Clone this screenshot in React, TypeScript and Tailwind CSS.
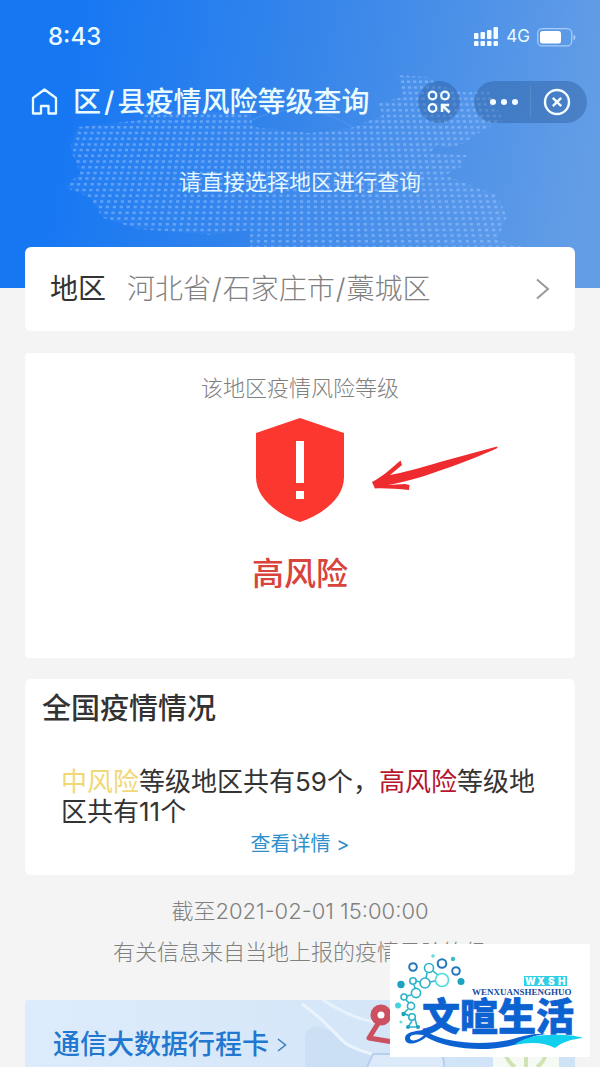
import React from 'react';

const MAP_OUTLINE =
    'M398 75 L430 77 L438 85 L467 93 L487 88 L503 120 L483 130 L467 142 L450 148 L437 145 L430 153 L467 155 L460 168 L445 175 L483 190 L497 194 L507 217 L497 240 L524 247 L250 252 L250 230 L210 235 L176 232 L137 229 L103 218 L90 198 L65 187 L80 173 L70 148 L77 127 L140 120 L147 110 L250 113 L253 127 L310 133 L350 128 L383 115 L377 103 L403 97 Z';

// rows of short dashes, spreading a little wider towards the bottom
const buildDots = () => {
    let d = '';
    for (let row = 0; row < 32; row++) {
        const y = 76 + row * 5.7;
        const step = 5.9 + row * 0.045;
        for (let col = -42; col <= 42; col++) {
            d += `M${(300 + col * step).toFixed(1)} ${y.toFixed(1)}h3.2`;
        }
    }
    return d;
};

const MAP_DOTS = buildDots();

const HeaderMap = React.memo(() => (
    <svg
        className="absolute top-0 left-1/2 -translate-x-1/2 pointer-events-none"
        width="600"
        height="288"
        viewBox="0 0 600 288"
        aria-hidden="true"
    >
        <clipPath id="map-outline">
            <path d={MAP_OUTLINE} />
        </clipPath>
        <g clipPath="url(#map-outline)">
            <path d={MAP_OUTLINE} fill="#7db4ff" opacity="0.1" />
            <path d={MAP_DOTS} stroke="#a9cdff" strokeWidth="2.5" opacity="0.44" />
        </g>
        <path d="M250 121 C275 108 315 102 352 127" fill="none" stroke="#8fbcf8" opacity="0.25" />
    </svg>
));

HeaderMap.displayName = 'HeaderMap';

const StatusBar = () => (
    <div className="relative flex h-[74px] items-center justify-between pl-12 pr-6 text-[#e9fbff]">
        <span className="text-2xl font-medium">8:43</span>
        <div className="flex items-center gap-[7px]">
            <svg width="25" height="20" viewBox="0 0 25 20" fill="#f4fdff" aria-hidden="true">
                <rect x="0" y="6" width="4.5" height="6" rx="1" />
                <rect x="6.5" y="5" width="4.5" height="7" rx="1" />
                <rect x="13" y="3" width="4.5" height="9" rx="1" />
                <rect x="19.5" y="0" width="4.5" height="12" rx="1" />
                <rect x="0" y="14" width="4.5" height="5" rx="1" />
                <rect x="6.5" y="14" width="4.5" height="5" rx="1" />
                <rect x="13" y="14" width="4.5" height="5" rx="1" />
                <rect x="19.5" y="14" width="4.5" height="5" rx="1" />
            </svg>
            <span className="text-[17px]">4G</span>
            <svg width="39" height="19" viewBox="0 0 39 19" aria-hidden="true">
                <rect x="0.7" y="0.7" width="34" height="17.2" rx="4.5" fill="none" stroke="#a5cdf6" strokeWidth="1.3" />
                <rect x="3" y="3" width="21" height="12.5" rx="2.5" fill="#fff" />
                <path d="M36.5 6.5 q2 1 2 3 t-2 3z" fill="#a5cdf6" />
            </svg>
        </div>
    </div>
);

const NavBar = () => (
    <div className="relative flex h-14 items-center pl-[31px] pr-[13px]">
        <button type="button" aria-label="首页">
            <svg width="28" height="28" viewBox="0 0 28 28" fill="none" stroke="#e9fbff" strokeWidth="2.3" strokeLinejoin="round" aria-hidden="true">
                <path d="M2 10 L13.5 1.5 L25 10 V25.5 H17.5 V18 H10 V25.5 H2 Z" />
            </svg>
        </button>
        <h1 className="ml-[14px] flex-1 whitespace-nowrap text-[28px] leading-8 font-medium text-[#e9fbff]">
            区<span className="mx-[3px]">/</span>县疫情风险等级查询
        </h1>
        <button type="button" aria-label="收藏" className="flex size-[42px] items-center justify-center rounded-full bg-[#1f4c8a]/35">
            <svg width="24" height="24" viewBox="0 0 24 24" fill="none" stroke="#f4fdff" strokeWidth="2.2" aria-hidden="true">
                <circle cx="5.5" cy="5.5" r="3.8" />
                <circle cx="18" cy="5.5" r="3.8" />
                <circle cx="5.5" cy="18" r="3.8" />
                <path d="M15 22 V15 H22 M15.5 15.5 L22.5 22.5" strokeWidth="2.5" />
            </svg>
        </button>
        <div className="ml-[14px] flex h-[42px] w-[113px] items-center rounded-full bg-[#1f4c8a]/35">
            <button type="button" aria-label="更多" className="flex h-8 flex-1 items-center justify-center gap-[5px] border-r border-white/10 pl-1">
                <span className="size-[6px] rounded-full bg-[#f4fdff]" />
                <span className="size-[6px] rounded-full bg-[#f4fdff]" />
                <span className="size-[6px] rounded-full bg-[#f4fdff]" />
            </button>
            <button type="button" aria-label="关闭" className="flex h-8 flex-1 items-center justify-center pr-1">
                <svg width="28" height="28" viewBox="0 0 28 28" fill="none" stroke="#f4fdff" strokeWidth="2.4" aria-hidden="true">
                    <circle cx="14" cy="14" r="12" />
                    <path d="M9.8 9.8 L18.2 18.2 M18.2 9.8 L9.8 18.2" />
                </svg>
            </button>
        </div>
    </div>
);

const RiskShield = () => (
    <div className="relative mx-auto mt-[17px] w-[90px]">
        <svg width="90" height="105" viewBox="0 0 90 105" aria-hidden="true">
            <path d="M45 1 L89 16 V60 C89 82 66 98 45 105 C24 98 1 82 1 60 V16 Z" fill="#fb372f" />
            <path d="M41 24 H49 V66 H41 Z M41 74 H49 V82 H41 Z" fill="#fff" />
        </svg>
        <svg className="absolute left-[115px] top-7" width="130" height="48" viewBox="0 0 130 48" aria-hidden="true">
            <path
                d="M127 1.5 L70 17 C50 23 32 28 20 30 L32 20 L30.5 15.5 C22 23 12 32 2 37 L5 43.5 C15 43 27 44 39 45 L39.5 40 L35 39 L18 40 C40 36 55 31 70 25.500 C95 17 112 10 127.5 3 Z"
                fill="#ee2b2e"
            />
        </svg>
    </div>
);

const SiteLogo = () => (
    <div className="absolute bottom-[10px] right-[10px] bg-white">
        <svg width="200" height="113" viewBox="0 0 200 113">
            <g fill="none" stroke="#2ab3c9" strokeWidth="1.6">
                <path d="M26 37 L30 38 M37 29 L36 34 M43 27 L48 31 M40 38 L45 37 M24 41 L25 44 M21 51 L17 52 M16 56 L19 59 M18 65 L14 69 L19 72 M22 77 L18 83 H27 M25 75 L27 82" />
                <circle cx="39" cy="24" r="4.5" />
                <circle cx="35" cy="39" r="5" />
                <circle cx="52" cy="36" r="6.5" stroke="#4fdcdc" />
                <circle cx="23" cy="37" r="3.2" />
                <circle cx="26" cy="49" r="4.6" />
                <circle cx="14" cy="53" r="3" />
                <circle cx="21" cy="62" r="3.6" />
                <circle cx="22" cy="73" r="3.3" />
            </g>
            <g fill="none" stroke="#2377ba" strokeWidth="2">
                <circle cx="23" cy="23" r="3.8" />
                <circle cx="52" cy="19.5" r="4.3" />
                <circle cx="66" cy="27" r="3.8" />
            </g>
            <g fill="#1ba3c0">
                <circle cx="11" cy="40.5" r="3.7" />
                <circle cx="71" cy="37.5" r="3.5" />
                <circle cx="63" cy="15" r="2.2" fill="#3bc0bd" />
                <circle cx="43" cy="12" r="1.8" fill="#6bdcd8" />
                <circle cx="8" cy="61.5" r="3" fill="#46d3dc" />
                <circle cx="13.5" cy="70" r="2.2" />
                <circle cx="11" cy="78" r="1.6" fill="#6bdcd8" />
                <circle cx="18" cy="83" r="2" />
                <circle cx="28" cy="83" r="2" />
            </g>
            <rect x="134" y="32" width="43" height="10" fill="#2fcfe4" />
            <text x="135 147 158 168" y="41" fontSize="10" fontWeight="900" fill="#fff" fontFamily="Inter, sans-serif">WXSH</text>
            <text x="82" y="51" fontSize="9" fontWeight="700" fill="#17499c" fontFamily="'Liberation Serif', serif">WENXUANSHENGHUO</text>
            <text
                x="32"
                y="86"
                fontSize="38"
                fontWeight="900"
                fill="#0d62d2"
                stroke="#0d62d2"
                strokeWidth="0.7"
                fontFamily="'Noto Sans CJK SC', sans-serif"
            >
                文暄生活
            </text>
            <path
                d="M44 84 C38 87 16 85 15 94 C15 103 28 100 36 93 C60 107 105 109 133 98 C140 93 146 91 156 90 C142 89 131 93 119 96 C94 101 60 100 39 89 M34 91 C29 97 20 98 20 94 C20 90 27 90 34 91 Z"
                fill="#0d62d2"
                fillRule="evenodd"
            />
            <path d="M124 101 C133 94 146 91 158 91 C172 90 185 91 193 94 C182 95 172 98 165 104 C154 98 140 98 124 101 Z" fill="#12cfee" />
        </svg>
    </div>
);

const TravelCardBanner = () => (
    <a href="#travel" className="relative mt-9 flex items-center gap-2 overflow-hidden rounded-t-sm bg-linear-to-r from-[#ddecfc] to-[#cfe2f6] pt-[29px] pb-[6px] pl-7">
        <svg className="absolute right-0 top-0" width="300" height="67" viewBox="0 0 300 67" aria-hidden="true">
            <path d="M30 67 V36 Q31 28 42 26 L58 32 Q70 50 100 54 V67 Z" fill="#cbdff5" />
            <path d="M27 4 C50 20 56 30 70 43 C80 50 92 53 105 56" fill="none" stroke="#ebf4fd" strokeWidth="3" />
            <path d="M48 0 C70 14 85 20 110 24" fill="none" stroke="#e8f2fc" strokeWidth="3" />
            <path d="M92 67 L98 54 H166 Q170 60 169 67" fill="#dceafa" stroke="#b5cfee" strokeWidth="2" />
            <path d="M104 22 L94 38 L118 42" fill="none" stroke="#cb5060" strokeWidth="5" strokeLinecap="round" strokeLinejoin="round" />
            <circle cx="106" cy="15" r="7" fill="#fff" stroke="#cb5060" strokeWidth="7" />
            <rect x="218" y="40" width="66" height="30" fill="#f6faf5" />
            <path d="M231 56 Q234 63 240 67 M251 54 V67 M270 56 Q268 63 262 67" fill="none" stroke="#cfe3b4" strokeWidth="4" />
        </svg>
        <span className="relative text-[27px] leading-8 font-medium text-[#2277d0]">通信大数据行程卡</span>
        <svg className="relative" width="10" height="16" viewBox="0 0 10 16" fill="none" stroke="#3f80bd" strokeWidth="1.6" aria-hidden="true">
            <path d="M1 2 L8.5 8 L1 14" />
        </svg>
    </a>
);

export default function App() {
    return (
        <div className="relative min-h-screen overflow-hidden bg-[#f4f4f4] font-['Inter','Noto_Sans_CJK_SC',sans-serif]">
            <header className="relative bg-linear-[100deg] from-[#1677f3] from-12% via-[#3786ea] via-50% to-[#639de6] to-95% pb-[90px]">
                <HeaderMap />
                <StatusBar />
                <NavBar />
                <p className="relative pt-9 text-center text-[22px] leading-8 text-[#e4f6ff]">请直接选择地区进行查询</p>
            </header>

            <main className="relative -mt-[41px] px-[25px]">
                <button type="button" className="flex w-full items-center rounded-md bg-white px-[25px] py-7 text-[28px] leading-7">
                    <span className="text-[#333]">地区</span>
                    <span className="ml-[21px] flex-1 text-left font-light text-[#808080]">
                        河北省<span className="mx-px">/</span>石家庄市<span className="mx-px">/</span>藁城区
                    </span>
                    <svg width="15" height="22" viewBox="0 0 15 22" fill="none" stroke="#999" strokeWidth="2" aria-hidden="true">
                        <path d="M2 1.5 L13 11 L2 20.5" />
                    </svg>
                </button>

                <section className="mt-[22px] rounded-sm bg-white pt-[23px] pb-16">
                    <h2 className="text-center text-[22px] leading-6 font-light text-[#808080]">该地区疫情风险等级</h2>
                    <RiskShield />
                    <p className="mt-8 text-center text-[32px] leading-10 font-medium text-[#d8433c]">高风险</p>
                </section>

                <section className="mt-[21px] rounded-md bg-white pt-[15px] pb-[19px]">
                    <h2 className="pl-[17px] text-[29px] leading-[30px] font-medium text-[#333]">全国疫情情况</h2>
                    <p className="mt-[43px] pl-9 pr-8 text-[26px] leading-[30px] text-[#333]">
                        <span className="text-[#f0d878]">中风险</span>等级地区共有59个，<span className="text-[#b5152f]">高风险</span>等级地区共有11个
                    </p>
                    <a href="#detail" className="mx-auto mt-[5px] block w-fit text-xl leading-6 text-[#3090cb]">查看详情 &gt;</a>
                </section>

                <footer className="text-center text-[22px] leading-6 font-light text-[#808080]">
                    <p className="mt-6">截至2021-02-01 15:00:00</p>
                    <p className="mt-[17px]">有关信息来自当地上报的疫情风险等级</p>
                </footer>

                <TravelCardBanner />
            </main>

            <SiteLogo />
        </div>
    );
}
